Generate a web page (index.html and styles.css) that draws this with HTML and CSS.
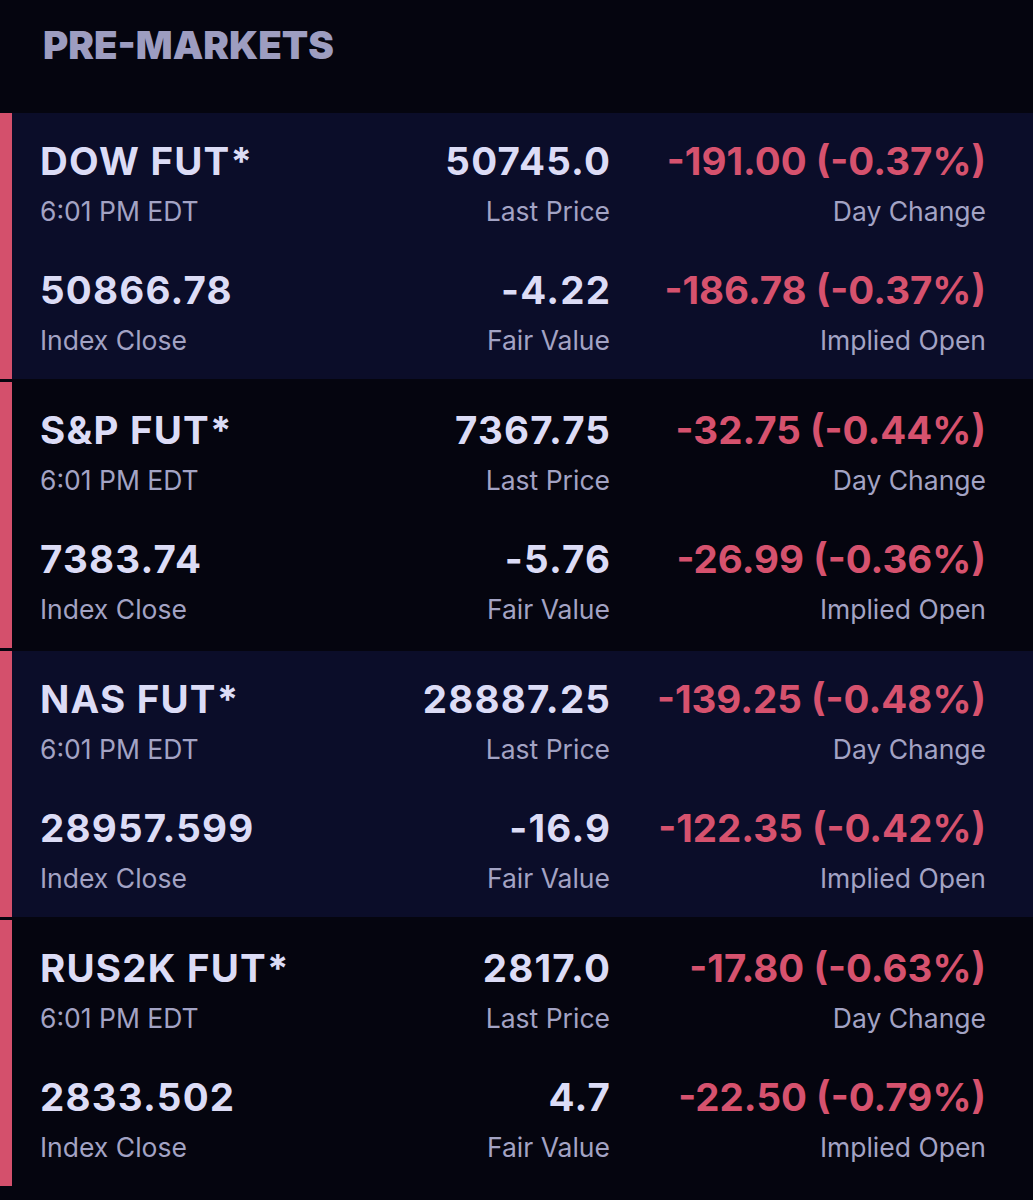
FILE: index.html
```html
<!DOCTYPE html>
<html>
<head>
<meta charset="utf-8">
<link rel="stylesheet" href="styles.css">
</head>
<body>
<div class="page">
  <h1 class="title">PRE-MARKETS</h1>
  <div class="list">
    <section class="row alt">
      <div class="cell"><div class="val">DOW FUT*</div><div class="lbl">6:01 PM EDT</div></div>
      <div class="cell r"><div class="val">50745.0</div><div class="lbl">Last Price</div></div>
      <div class="cell r"><div class="val neg">-191.00 (-0.37%)</div><div class="lbl">Day Change</div></div>
      <div class="cell"><div class="val">50866.78</div><div class="lbl">Index Close</div></div>
      <div class="cell r"><div class="val">-4.22</div><div class="lbl">Fair Value</div></div>
      <div class="cell r"><div class="val neg">-186.78 (-0.37%)</div><div class="lbl">Implied Open</div></div>
    </section>
    <section class="row">
      <div class="cell"><div class="val">S&amp;P FUT*</div><div class="lbl">6:01 PM EDT</div></div>
      <div class="cell r"><div class="val">7367.75</div><div class="lbl">Last Price</div></div>
      <div class="cell r"><div class="val neg">-32.75 (-0.44%)</div><div class="lbl">Day Change</div></div>
      <div class="cell"><div class="val">7383.74</div><div class="lbl">Index Close</div></div>
      <div class="cell r"><div class="val">-5.76</div><div class="lbl">Fair Value</div></div>
      <div class="cell r"><div class="val neg">-26.99 (-0.36%)</div><div class="lbl">Implied Open</div></div>
    </section>
    <section class="row alt">
      <div class="cell"><div class="val">NAS FUT*</div><div class="lbl">6:01 PM EDT</div></div>
      <div class="cell r"><div class="val">28887.25</div><div class="lbl">Last Price</div></div>
      <div class="cell r"><div class="val neg">-139.25 (-0.48%)</div><div class="lbl">Day Change</div></div>
      <div class="cell"><div class="val">28957.599</div><div class="lbl">Index Close</div></div>
      <div class="cell r"><div class="val">-16.9</div><div class="lbl">Fair Value</div></div>
      <div class="cell r"><div class="val neg">-122.35 (-0.42%)</div><div class="lbl">Implied Open</div></div>
    </section>
    <section class="row">
      <div class="cell"><div class="val">RUS2K FUT*</div><div class="lbl">6:01 PM EDT</div></div>
      <div class="cell r"><div class="val">2817.0</div><div class="lbl">Last Price</div></div>
      <div class="cell r"><div class="val neg">-17.80 (-0.63%)</div><div class="lbl">Day Change</div></div>
      <div class="cell"><div class="val">2833.502</div><div class="lbl">Index Close</div></div>
      <div class="cell r"><div class="val">4.7</div><div class="lbl">Fair Value</div></div>
      <div class="cell r"><div class="val neg">-22.50 (-0.79%)</div><div class="lbl">Implied Open</div></div>
    </section>
  </div>
</div>
</body>
</html>
```
FILE: styles.css
```css
html, body {
  margin: 0;
  padding: 0;
  background: #05050f;
}
body {
  font-family: Inter, "Open Sans", sans-serif;
  width: 1033px;
  height: 1200px;
  overflow: hidden;
}
.title {
  margin: 0;
  height: 113px;
  box-sizing: border-box;
  padding: 21px 0 0 43px;
  font-size: 38.5px;
  font-weight: 900;
  line-height: 48px;
  color: #9d9dc0;
}
.list {
  display: flex;
  flex-direction: column;
  gap: 3px;
}
.row {
  height: 266px;
  box-sizing: border-box;
  border-left: 12px solid #d4506c;
  padding: 24px 47px 0 28px;
  display: grid;
  grid-template-columns: 1fr 200px 376px;
  grid-template-rows: 90px 90px;
  row-gap: 39px;
  background: #05050f;
}
.row.alt {
  background: #0b0d29;
}
.cell {
  display: flex;
  flex-direction: column;
  gap: 10px;
}
.cell.r {
  align-items: flex-end;
}
.val {
  font-size: 38.5px;
  line-height: 48px;
  font-weight: 700;
  color: #dcdcf6;
  white-space: nowrap;
  letter-spacing: 1.2px;
}
.cell.r .val {
  margin-right: -1.2px;
}
.val.neg {
  color: #d6526e;
  letter-spacing: 0;
}
.cell.r .val.neg {
  margin-right: 0;
}
.lbl {
  font-size: 26.5px;
  line-height: 32px;
  font-weight: 400;
  color: #a3a3c4;
  white-space: nowrap;
}
```
